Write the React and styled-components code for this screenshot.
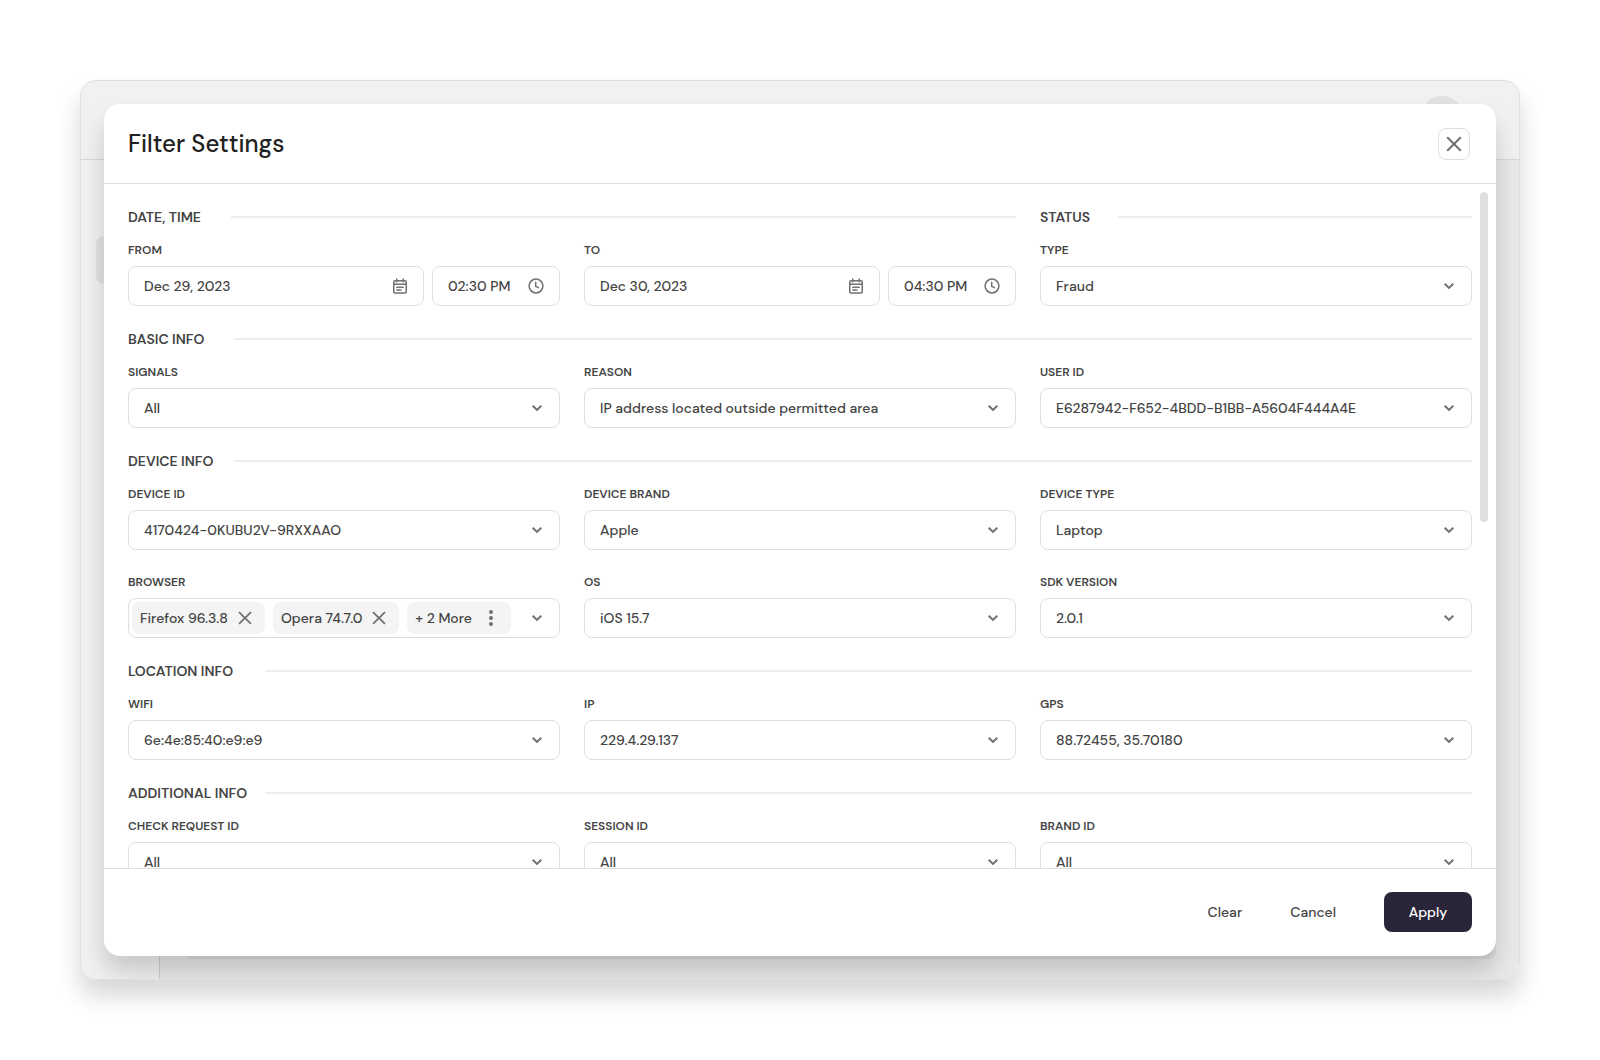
import React, { useId, useState } from "react";
import styled, { createGlobalStyle } from "styled-components";

const GlobalStyle = createGlobalStyle`
  *, *::before, *::after { box-sizing: border-box; }
  body { margin: 0; background: #fff; }
  body, button, input, select {
    font-family: "DM Sans", Inter, "Liberation Sans", sans-serif;
    font-size: 14px;
    font-weight: 500;
    color: #444;
  }
`;

const Page = styled.div`
  min-height: 100vh;
  padding: 80px;
  display: grid;
`;

const AppWindow = styled.div`
  position: relative;
  display: grid;
  grid-template: 79px 1fr / 79px 1fr;
  border: 1px solid #dfdfdf;
  border-radius: 16px;
  background: #f1f1f1;
  overflow: hidden;
`;

const WindowShadow = styled.div`
  display: grid;
  border-radius: 16px;
  box-shadow: 0 16px 24px rgba(0, 0, 0, 0.16);
`;

const AppBar = styled.header`
  grid-column: 1 / -1;
  display: flex;
  justify-content: flex-end;
  padding: 15px 56px;
  border-bottom: 1px solid #d8d8d8;
`;

const Avatar = styled.div`
  width: 42px;
  height: 42px;
  border-radius: 50%;
  background: #e2e2e2;
`;

const SideNav = styled.nav`
  padding: 76px 15px;
  border-right: 1px solid #d0d0d0;
`;

const NavItem = styled.div`
  height: 48px;
  border-radius: 8px;
  background: #e2e2e2;
`;

const Canvas = styled.main`
  display: grid;
  padding: 72px 23px 20px 24px;
  background: #e9e9eb;
`;

const CanvasCard = styled.div`
  border-radius: 8px;
  background: #dcdcdd;
`;

const Dialog = styled.form`
  position: absolute;
  inset: 23px;
  display: flex;
  flex-direction: column;
  border-radius: 16px;
  background: #fff;
  box-shadow: 0 16px 24px rgba(0, 0, 0, 0.17);
`;

const DialogHeader = styled.header`
  flex: none;
  height: 80px;
  display: flex;
  align-items: center;
  justify-content: space-between;
  padding: 0 26px 0 24px;
  border-bottom: 1px solid #dfdfdf;
`;

const DialogTitle = styled.h1`
  margin: 0;
  font-size: 24px;
  font-weight: 500;
  line-height: 32px;
  color: #222;
`;

const CloseButton = styled.button`
  display: grid;
  place-items: center;
  width: 32px;
  height: 32px;
  padding: 0;
  border: 1px solid #dfdfdf;
  border-radius: 8px;
  background: #fff;
  color: #707070;
  cursor: pointer;
`;

const DialogBody = styled.div`
  flex: 1;
  min-height: 0;
  display: flex;
  overflow: hidden;
  padding: 0 8px 0 24px;
`;

const Sections = styled.div`
  flex: 1;
  min-width: 0;
  padding: 24px 0;
  display: flex;
  flex-direction: column;
  gap: 24px;
`;

const ScrollTrack = styled.div`
  flex: none;
  width: 16px;
  padding: 8px 0 8px 8px;
`;

const ScrollThumb = styled.div`
  height: 330px;
  border-radius: 4px;
  background: #dfdfdf;
`;

const Columns = styled.div`
  display: grid;
  grid-template-columns: repeat(3, minmax(0, 1fr));
  gap: 24px;
`;

const Section = styled.section`
  display: grid;
  gap: 16px;
  grid-column: span ${(p) => p.$span || 1};
`;

const SectionGrid = styled.div`
  display: grid;
  grid-template-columns: repeat(${(p) => p.$columns}, minmax(0, 1fr));
  gap: 24px;
`;

const SectionHeading = styled.div`
  display: flex;
  align-items: center;
  height: 18px;

  &::after {
    content: "";
    flex: 1;
    height: 2px;
    background: #eee;
  }
`;

const SectionTitle = styled.h2`
  width: ${(p) => p.$width}px;
  margin: 0;
  font-size: 14px;
  font-weight: 600;
  line-height: 18px;
  white-space: nowrap;
`;

const FieldBox = styled.div`
  display: grid;
  gap: 8px;
`;

const Label = styled.label`
  font-size: 12px;
  font-weight: 600;
  line-height: 16px;
`;

const Control = styled.div`
  display: flex;
  align-items: center;
  gap: 8px;
  height: 40px;
  padding: ${(p) => p.$padding || "0 15px"};
  border: 1px solid #dfdfdf;
  border-radius: 8px;
  background: #fff;
`;

const TextInput = styled.input`
  flex: 1;
  min-width: 0;
  padding: 0;
  border: 0;
  outline: 0;
  background: none;
`;

const DateTime = styled.div`
  display: grid;
  grid-template-columns: minmax(0, 1fr) 128px;
  gap: 8px;
`;

const SelectBox = styled.div`
  display: grid;
  align-items: center;

  > * { grid-area: 1 / 1; }
`;

const Select = styled.select`
  appearance: none;
  width: 100%;
  height: 40px;
  padding: 0 40px 0 15px;
  border: 1px solid #dfdfdf;
  border-radius: 8px;
  background: #fff;
`;

const SelectArrow = styled.span`
  display: flex;
  justify-self: end;
  margin-right: 15px;
  color: #707070;
  pointer-events: none;
`;

const IconButton = styled.button`
  display: grid;
  place-items: center;
  width: ${(p) => p.$size || 16}px;
  height: ${(p) => p.$size || 16}px;
  padding: 0;
  border: 0;
  background: none;
  color: #707070;
  cursor: pointer;
`;

const Chip = styled.span`
  display: flex;
  align-items: center;
  gap: ${(p) => p.$gap}px;
  height: 32px;
  padding: 0 8px;
  border-radius: 8px;
  background: #f4f4f4;
  white-space: nowrap;
`;

const PushEnd = styled.span`
  flex: 1;
`;

const DialogFooter = styled.footer`
  flex: none;
  height: 88px;
  display: flex;
  justify-content: flex-end;
  padding: 23px 24px;
  border-top: 1px solid #dfdfdf;
`;

const TextButton = styled.button`
  height: 40px;
  padding: 0 24px;
  border: 0;
  border-radius: 8px;
  background: none;
  cursor: pointer;
`;

const ApplyButton = styled(TextButton)`
  min-width: 88px;
  margin-left: 24px;
  background: #2b2539;
  color: #fff;
`;

const CrossIcon = ({ size = 16 }) => (
  <svg width={size} height={size} viewBox="0 0 16 16" fill="none" stroke="currentColor" strokeWidth="2" aria-hidden="true">
    <path d="M1.2 1.2l13.6 13.6M14.8 1.2L1.2 14.8" />
  </svg>
);

const ChevronIcon = () => (
  <svg width="16" height="16" viewBox="0 0 16 16" fill="none" stroke="currentColor" strokeWidth="2" aria-hidden="true">
    <path d="M3.7 5.7L8 9.9l4.3-4.2" />
  </svg>
);

const CalendarIcon = () => (
  <svg width="16" height="16" viewBox="0 0 16 16" fill="none" stroke="currentColor" strokeWidth="1.5" aria-hidden="true">
    <rect x="1.75" y="2.75" width="12.5" height="12.2" rx="1.2" />
    <path d="M1.7 6.2h12.6M4.7 0.5v4M11.3 0.5v4M4.3 9.2h7.4M4.3 12h5.2" />
  </svg>
);

const ClockIcon = () => (
  <svg width="16" height="16" viewBox="0 0 16 16" fill="none" stroke="currentColor" strokeWidth="1.5" aria-hidden="true">
    <circle cx="8" cy="8" r="6.9" />
    <path d="M7.7 3.8v4.5l3.2 1.6" />
  </svg>
);

const DotsIcon = () => (
  <svg width="16" height="16" viewBox="0 0 16 16" fill="currentColor" aria-hidden="true">
    <circle cx="8" cy="2" r="2" />
    <circle cx="8" cy="8" r="2" />
    <circle cx="8" cy="14" r="2" />
  </svg>
);

function Heading({ title, width }) {
  return (
    <SectionHeading>
      <SectionTitle $width={width}>{title}</SectionTitle>
    </SectionHeading>
  );
}

function SelectField({ label, value }) {
  const id = useId();
  return (
    <FieldBox>
      <Label htmlFor={id}>{label}</Label>
      <SelectBox>
        <Select id={id} defaultValue={value}>
          <option>{value}</option>
        </Select>
        <SelectArrow><ChevronIcon /></SelectArrow>
      </SelectBox>
    </FieldBox>
  );
}

function DateTimeField({ label, date, time }) {
  const id = useId();
  return (
    <FieldBox>
      <Label htmlFor={id}>{label}</Label>
      <DateTime>
        <Control>
          <TextInput id={id} defaultValue={date} />
          <IconButton type="button" aria-label="Open calendar"><CalendarIcon /></IconButton>
        </Control>
        <Control>
          <TextInput defaultValue={time} aria-label={`${label} time`} />
          <IconButton type="button" aria-label="Pick time"><ClockIcon /></IconButton>
        </Control>
      </DateTime>
    </FieldBox>
  );
}

function BrowserField() {
  const id = useId();
  const [browsers, setBrowsers] = useState(["Firefox 96.3.8", "Opera 74.7.0"]);
  return (
    <FieldBox>
      <Label as="span" id={id}>BROWSER</Label>
      <Control role="group" aria-labelledby={id} $padding="0 14px 0 3px">
        {browsers.map((name) => (
          <Chip key={name} $gap={5}>
            {name}
            <IconButton $size={24} type="button" aria-label={`Remove ${name}`} onClick={() => setBrowsers(browsers.filter((b) => b !== name))}>
              <CrossIcon size={14} />
            </IconButton>
          </Chip>
        ))}
        <Chip $gap={7}>
          + 2 More
          <IconButton $size={24} type="button" aria-label="Show more browsers"><DotsIcon /></IconButton>
        </Chip>
        <PushEnd />
        <IconButton type="button" aria-label="Open browser list"><ChevronIcon /></IconButton>
      </Control>
    </FieldBox>
  );
}

const BASIC = [
  ["SIGNALS", "All"],
  ["REASON", "IP address located outside permitted area"],
  ["USER ID", "E6287942-F652-4BDD-B1BB-A5604F444A4E"],
];
const DEVICE = [
  ["DEVICE ID", "4170424-0KUBU2V-9RXXAAO"],
  ["DEVICE BRAND", "Apple"],
  ["DEVICE TYPE", "Laptop"],
];
const SOFTWARE = [
  ["OS", "iOS 15.7"],
  ["SDK VERSION", "2.0.1"],
];
const LOCATION = [
  ["WIFI", "6e:4e:85:40:e9:e9"],
  ["IP", "229.4.29.137"],
  ["GPS", "88.72455, 35.70180"],
];
const ADDITIONAL = [
  ["CHECK REQUEST ID", "All"],
  ["SESSION ID", "All"],
  ["BRAND ID", "All"],
];

const renderFields = (fields) =>
  fields.map(([label, value]) => <SelectField key={label} label={label} value={value} />);

export default function App() {
  return (
    <>
      <GlobalStyle />
      <Page>
        <WindowShadow>
          <AppWindow>
            <AppBar><Avatar /></AppBar>
            <SideNav><NavItem /></SideNav>
            <Canvas><CanvasCard /></Canvas>

            <Dialog role="dialog" aria-labelledby="filter-title" onSubmit={(e) => e.preventDefault()}>
              <DialogHeader>
                <DialogTitle id="filter-title">Filter Settings</DialogTitle>
                <CloseButton type="button" aria-label="Close"><CrossIcon /></CloseButton>
              </DialogHeader>

              <DialogBody>
                <Sections>
                  <Columns>
                    <Section $span={2}>
                      <Heading title="DATE, TIME" width={103} />
                      <SectionGrid $columns={2}>
                        <DateTimeField label="FROM" date="Dec 29, 2023" time="02:30 PM" />
                        <DateTimeField label="TO" date="Dec 30, 2023" time="04:30 PM" />
                      </SectionGrid>
                    </Section>
                    <Section>
                      <Heading title="STATUS" width={78} />
                      <SelectField label="TYPE" value="Fraud" />
                    </Section>
                  </Columns>

                  <Section>
                    <Heading title="BASIC INFO" width={106} />
                    <SectionGrid $columns={3}>{renderFields(BASIC)}</SectionGrid>
                  </Section>

                  <Section>
                    <Heading title="DEVICE INFO" width={106} />
                    <SectionGrid $columns={3}>
                      {renderFields(DEVICE)}
                      <BrowserField />
                      {renderFields(SOFTWARE)}
                    </SectionGrid>
                  </Section>

                  <Section>
                    <Heading title="LOCATION INFO" width={137} />
                    <SectionGrid $columns={3}>{renderFields(LOCATION)}</SectionGrid>
                  </Section>

                  <Section>
                    <Heading title="ADDITIONAL INFO" width={137} />
                    <SectionGrid $columns={3}>{renderFields(ADDITIONAL)}</SectionGrid>
                  </Section>
                </Sections>
                <ScrollTrack><ScrollThumb /></ScrollTrack>
              </DialogBody>

              <DialogFooter>
                <TextButton type="button">Clear</TextButton>
                <TextButton type="button">Cancel</TextButton>
                <ApplyButton type="submit">Apply</ApplyButton>
              </DialogFooter>
            </Dialog>
          </AppWindow>
        </WindowShadow>
      </Page>
    </>
  );
}
